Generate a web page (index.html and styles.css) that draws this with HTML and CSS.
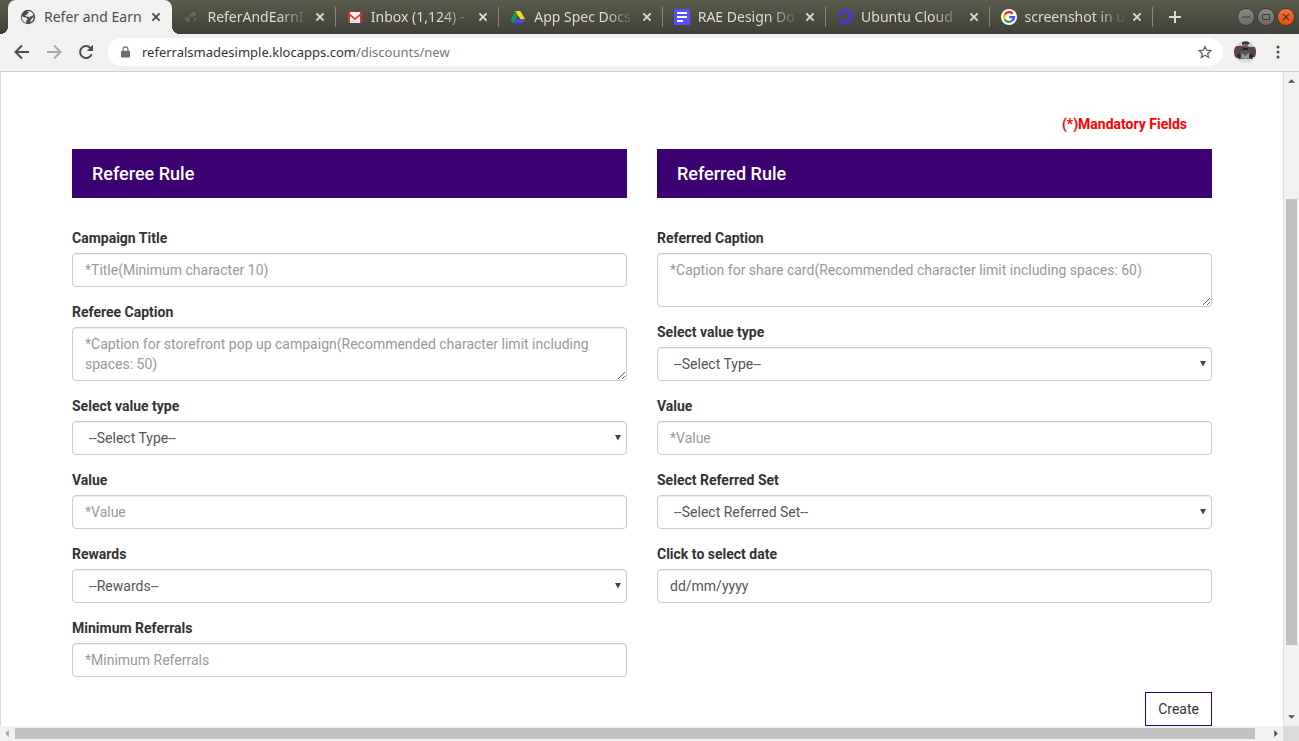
FILE: index.html
```html
<!DOCTYPE html>
<html lang="en">
<head>
<meta charset="utf-8">
<title>Refer and Earn</title>
<link rel="stylesheet" href="styles.css">
</head>
<body>
<svg class="defs" width="0" height="0" aria-hidden="true">
  <symbol id="globe" viewBox="0 0 16 16"><circle cx="8" cy="8" r="7.2" fill="currentColor"/><path class="land" d="M1.8 7.2 L4.6 8.6 L6.6 8.8 L7.6 10.2 L6.4 11.6 L6.2 13.9 A6 6 0 0 1 1.8 7.2Z M7.2 2 A6.2 6.2 0 0 1 13.2 4.8 L12.4 7.2 L10.6 7 L10 8.6 L8 7.6 L5.6 7.6 L5.4 6 L7.8 5.6 L7.6 4 L9.2 3.4Z M12.4 9 L13.9 8.6 A6 6 0 0 1 10.6 13.2 L10.6 11 Z"/></symbol>
  <symbol id="cross" viewBox="0 0 10 10"><path d="M1.4 1.4 L8.6 8.6 M8.6 1.4 L1.4 8.6" fill="none" stroke="currentColor" stroke-width="1.9"/></symbol>
  <symbol id="down" viewBox="0 0 8 7"><path d="M1 1 H7 L4 6.600Z" fill="currentColor"/></symbol>
</svg>

<header class="browser">
  <div class="titlebar">
    <nav class="tabs" aria-label="Tabs">
      <div class="tab active">
        <svg class="favicon"><use href="#globe"/></svg>
        <span class="tab-title">Refer and Earn</span>
        <button class="close" aria-label="Close tab"><svg><use href="#cross"/></svg></button>
      </div>
      <div class="tab">
        <svg class="favicon dim"><use href="#globe"/></svg>
        <span class="tab-title">ReferAndEarnI</span>
        <button class="close" aria-label="Close tab"><svg><use href="#cross"/></svg></button>
      </div>
      <div class="tab">
        <svg class="favicon" viewBox="0 0 16 16"><path d="M1 3h14v11H1z" fill="#f2f2f2"/><path d="M3.500 13.500 L8 9.500 L12.500 13.500Z" fill="#dcdcdc"/><path d="M1 3.200 L8 9 L15 3.200 V5.400 L8 11 L1 5.400Z" fill="#e2382b"/><path d="M1 3h2v11H1z M13 3H15v11h-2z" fill="#d9301f"/></svg>
        <span class="tab-title">Inbox (1,124) -</span>
        <button class="close" aria-label="Close tab"><svg><use href="#cross"/></svg></button>
      </div>
      <div class="tab">
        <svg class="favicon" viewBox="0 0 16 16"><path d="M5.300 2 L0.600 10.300 L3.100 14.200 L8 6.200Z" fill="#0f9d58"/><path d="M5.300 2 H10.300 L15.200 10.300 H10.400Z" fill="#ffd61a"/><path d="M5.600 10.300 H15.300 L12.900 14.200 H3.100Z" fill="#4f46f5"/></svg>
        <span class="tab-title">App Spec Docs</span>
        <button class="close" aria-label="Close tab"><svg><use href="#cross"/></svg></button>
      </div>
      <div class="tab">
        <svg class="favicon" viewBox="0 0 16 16"><rect width="16" height="16" rx="1.500" fill="#5b4dff"/><path d="M3 4h10M3 8h10M3 12h6" stroke="#fff" stroke-width="1.800"/></svg>
        <span class="tab-title">RAE Design Do</span>
        <button class="close" aria-label="Close tab"><svg><use href="#cross"/></svg></button>
      </div>
      <div class="tab">
        <svg class="favicon" viewBox="0 0 16 16"><path d="M1.500 8 A6.500 6.500 0 1 1 8 14.500" fill="none" stroke="#4331ff" stroke-width="2.600" transform="translate(0.800 0.400) scale(0.920)"/><path d="M5.400 10.800h2.800v3H5.400z M3 13h2.200v2.200H3z M1.200 11.200H3V13H1.200z" fill="#4331ff"/></svg>
        <span class="tab-title">Ubuntu Cloud</span>
        <button class="close" aria-label="Close tab"><svg><use href="#cross"/></svg></button>
      </div>
      <div class="tab">
        <svg class="favicon" viewBox="0 0 16 16"><circle cx="8" cy="8" r="8" fill="#fff"/><g fill="none" stroke-width="2.400"><path d="M11.600 4.600 A4.900 4.900 0 0 0 3.800 5.500" stroke="#ea2b1f"/><path d="M3.800 5.500 A4.900 4.900 0 0 0 3.800 10.500" stroke="#fbbc05"/><path d="M3.800 10.500 A4.900 4.900 0 0 0 11.200 11.700" stroke="#1fa84c"/><path d="M11.200 11.700 A4.900 4.900 0 0 0 12.900 8.100 H8.200" stroke="#4f46f5"/></g></svg>
        <span class="tab-title">screenshot in u</span>
        <button class="close" aria-label="Close tab"><svg><use href="#cross"/></svg></button>
      </div>
    </nav>
    <button class="new-tab" aria-label="New tab"><svg viewBox="0 0 12 12"><path d="M6 0v12M0 6h12" stroke="currentColor" stroke-width="2"/></svg></button>
    <div class="window-buttons">
      <button class="win" aria-label="Minimize"><svg viewBox="0 0 16 16"><path d="M4 8h8" stroke="currentColor"/></svg></button>
      <button class="win" aria-label="Maximize"><svg viewBox="0 0 16 16"><path d="M4.500 5.500h7v5h-7z" fill="none" stroke="currentColor"/></svg></button>
      <button class="win quit" aria-label="Close"><svg viewBox="0 0 16 16"><path d="M5 5l6 6M11 5l-6 6" stroke="currentColor" stroke-width="1.200"/></svg></button>
    </div>
  </div>

  <div class="toolbar">
    <button class="tool" aria-label="Back"><svg viewBox="0 0 16 16"><path d="M15 8H2M8 1.500L1.500 8L8 14.500" fill="none" stroke="currentColor" stroke-width="2"/></svg></button>
    <button class="tool off" aria-label="Forward"><svg viewBox="0 0 16 16"><path d="M1 8h13M8 1.500L14.500 8L8 14.500" fill="none" stroke="currentColor" stroke-width="2"/></svg></button>
    <button class="tool" aria-label="Reload"><svg viewBox="0 0 16 16"><path d="M13.600 10.300 A6 6 0 1 1 12.400 3.900" fill="none" stroke="currentColor" stroke-width="2"/><path d="M15 0.800V7H8.800Z" fill="currentColor"/></svg></button>
    <div class="address">
      <svg class="lock" viewBox="0 0 10 12"><path d="M1 4.500h8a1 1 0 0 1 1 1V11a1 1 0 0 1-1 1H1a1 1 0 0 1-1-1V5.500a1 1 0 0 1 1-1z" fill="currentColor"/><path d="M2.300 5V3a2.700 2.700 0 0 1 5.400 0v2" fill="none" stroke="currentColor" stroke-width="1.200"/></svg>
      <span class="url">referralsmadesimple.klocapps.com<span class="path">/discounts/new</span></span>
      <button class="star" aria-label="Bookmark this page"><svg viewBox="0 0 14 14"><path d="M7 1.400L8.700 5.200L12.900 5.600L9.700 8.400L10.600 12.500L7 10.300L3.400 12.500L4.300 8.400L1.100 5.600L5.300 5.200Z" fill="none" stroke="currentColor" stroke-width="1.300"/></svg></button>
    </div>
    <button class="avatar" aria-label="Profile"><svg viewBox="0 0 22 22"><clipPath id="round"><circle cx="11" cy="11" r="11"/></clipPath><g clip-path="url(#round)"><path d="M0 0h22v22H0z" fill="#d8d5d6"/><path d="M0 6 Q5 4 11 5 T22 6V17H0z" fill="#5b434a"/><path d="M8 1l5-1 3 2-2 2H8z" fill="#38394a"/><path d="M9 3h5v6H9z" fill="#8a6459"/><path d="M9 6.500h5V9l-2.500 1.500L9 9z" fill="#241f24"/><path d="M4 18l2-7 4-2h3l4 2 2 7z" fill="#4e5a55"/><path d="M8 12l3 3 4-3 1 5-4 1-5-1z" fill="#8e9a92"/><path d="M3 14l3-2 1 4-3 2z M16 12l3 2-1 4-3-2z" fill="#2c2429"/><path d="M0 16l4 1 1 2h13l1-3 3 0v6H0z" fill="#dedcdc"/></g></svg></button>
    <button class="menu" aria-label="Menu"><svg viewBox="0 0 4 14"><circle cx="2" cy="2" r="1.500"/><circle cx="2" cy="7" r="1.500"/><circle cx="2" cy="12" r="1.500"/></svg></button>
  </div>
</header>

<div class="viewport">
  <main class="page">
    <form class="container">
      <p class="mandatory">(*)Mandatory Fields</p>
      <div class="columns">
        <section class="column">
          <h4 class="panel-title">Referee Rule</h4>
          <div class="field"><label for="title">Campaign Title</label><input class="control" id="title" type="text" placeholder="*Title(Minimum character 10)"></div>
          <div class="field"><label for="caption">Referee Caption</label><textarea class="control" id="caption" rows="2" placeholder="*Caption for storefront pop up campaign(Recommended character limit including spaces: 50)"></textarea></div>
          <div class="field"><label for="type">Select value type</label><div class="select"><select class="control" id="type"><option>--Select Type--</option></select><svg><use href="#down"/></svg></div></div>
          <div class="field"><label for="value">Value</label><input class="control" id="value" type="text" placeholder="*Value"></div>
          <div class="field"><label for="rewards">Rewards</label><div class="select"><select class="control" id="rewards"><option>--Rewards--</option></select><svg><use href="#down"/></svg></div></div>
          <div class="field"><label for="minimum">Minimum Referrals</label><input class="control" id="minimum" type="text" placeholder="*Minimum Referrals"></div>
        </section>
        <section class="column">
          <h4 class="panel-title">Referred Rule</h4>
          <div class="field"><label for="rcaption">Referred Caption</label><textarea class="control" id="rcaption" rows="2" placeholder="*Caption for share card(Recommended character limit including spaces: 60)"></textarea></div>
          <div class="field"><label for="rtype">Select value type</label><div class="select"><select class="control" id="rtype"><option>--Select Type--</option></select><svg><use href="#down"/></svg></div></div>
          <div class="field"><label for="rvalue">Value</label><input class="control" id="rvalue" type="text" placeholder="*Value"></div>
          <div class="field"><label for="rset">Select Referred Set</label><div class="select"><select class="control" id="rset"><option>--Select Referred Set--</option></select><svg><use href="#down"/></svg></div></div>
          <div class="field"><label for="date">Click to select date</label><input class="control date" id="date" type="text" placeholder="dd/mm/yyyy"></div>
        </section>
      </div>
      <div class="actions"><button class="create" type="button">Create</button></div>
    </form>
  </main>
  <div class="scroll vertical">
    <svg viewBox="0 0 8 4"><path d="M0 4h8L4 0z"/></svg>
    <div class="track"><div class="thumb"></div></div>
    <svg viewBox="0 0 8 4"><path d="M0 0h8L4 4z"/></svg>
  </div>
  <div class="scroll horizontal">
    <svg class="faded" viewBox="0 0 4 8"><path d="M4 0v8L0 4z"/></svg>
    <div class="track"><div class="thumb"></div></div>
    <svg viewBox="0 0 4 8"><path d="M0 0v8l4-4z"/></svg>
  </div>
  <div class="corner"></div>
</div>
</body>
</html>
```
FILE: styles.css
```css
* { box-sizing: border-box; }

body {
  margin: 0;
  height: 100vh;
  display: flex;
  flex-direction: column;
  overflow: hidden;
  background: #fff;
  color: #333;
  font: 14px/20px Roboto, sans-serif;
}

button {
  display: flex;
  align-items: center;
  justify-content: center;
  padding: 0;
  border: 0;
  background: none;
  color: inherit;
  font: inherit;
}

.defs { position: absolute; }

/* Browser window */
.browser { flex: none; font-family: "Noto Sans", sans-serif; }

.titlebar {
  display: flex;
  align-items: center;
  height: 34px;
  padding: 0 5px 0 10px;
  background: linear-gradient(#5b5b4c, #3f3e39);
  color: #dfdbd2;
}

.tabs { display: flex; flex: 0 1 1143px; min-width: 0; height: 34px; }

.tab {
  position: relative;
  flex: 1 1 0;
  min-width: 0;
  display: flex;
  align-items: center;
  padding: 0 10px 0 11px;
}

.tab:not(.active)::after {
  content: "";
  position: absolute;
  right: 0;
  top: 7px;
  width: 1px;
  height: 20px;
  background: #87867b;
}

.tab.active {
  margin-left: -2px;
  padding-left: 12px;
  flex-basis: 3px;
  border-radius: 8px 8px 0 0;
  background: #f2f1f0;
  color: #4c4c4c;
}

.tab.active::before,
.tab.active::after {
  content: "";
  position: absolute;
  bottom: 0;
  width: 8px;
  height: 8px;
}

.tab.active::before { left: -8px; background: radial-gradient(circle at 0 0, transparent 8px, #f2f1f0 8px); }
.tab.active::after { right: -8px; background: radial-gradient(circle at 100% 0, transparent 8px, #f2f1f0 8px); }

.favicon { flex: none; width: 16px; height: 16px; margin-right: 8px; }
.land { fill: #f2f1f0; }
.favicon.dim { color: #45464a; opacity: 0.15; }

.tab-title {
  flex: 1;
  min-width: 0;
  overflow: hidden;
  white-space: nowrap;
  -webkit-mask-image: linear-gradient(90deg, #000 70%, transparent);
}

.tab.active .tab-title { -webkit-mask-image: none; }

.close { flex: none; width: 12px; height: 16px; margin-left: 5px; }
.close svg { width: 10px; height: 10px; }

.new-tab { flex: none; width: 24px; height: 24px; margin-left: 10px; }
.new-tab svg { width: 12px; height: 12px; }

.window-buttons { display: flex; gap: 4px; margin-left: auto; }
.win { width: 16px; height: 16px; border-radius: 50%; background: linear-gradient(#8b8a81, #6b6a64); color: #3c3b37; box-shadow: 0 0 0 1px #3c3b37; }
.win svg { width: 16px; height: 16px; }
.quit { background: linear-gradient(#f9703a, #e84e0c); }

.toolbar {
  display: flex;
  align-items: center;
  height: 38px;
  padding: 0 13px 1px 14px;
  border-bottom: 1px solid #ccc;
  background: #f2f1f0;
  color: #4c4c4c;
}

.tool { width: 16px; height: 16px; margin-right: 16px; }
.tool svg { width: 16px; height: 16px; }
.tool.off { color: #aaa; }

.address {
  flex: 1;
  min-width: 0;
  display: flex;
  align-items: center;
  height: 28px;
  margin-left: -2px;
  padding: 0 10px 0 13px;
  border-radius: 14px;
  background: #fff;
}

.lock { width: 9px; height: 12px; margin-right: 12px; color: #6e6e6e; }
.url { flex: 1; color: #333; font-size: 13px; white-space: nowrap; }
.path { color: #777; }
.star { width: 16px; height: 16px; color: #666; }
.star svg { width: 14px; height: 14px; }
.avatar { width: 22px; height: 22px; margin-left: 11px; }
.avatar svg { width: 22px; height: 22px; }
.menu { width: 16px; height: 16px; margin-left: 14px; }
.menu svg { width: 4px; height: 14px; fill: currentColor; }

/* Page area with its scrollbars */
.viewport {
  flex: 1;
  min-height: 0;
  display: grid;
  grid-template: minmax(0, 1fr) 15px / minmax(0, 1fr) 16px;
}

.page { overflow: hidden; border-left: 1px solid #dcdcdc; }
.container { max-width: 1140px; margin: 0 auto; padding-top: 42px; }

.mandatory {
  margin: 0 25px 15px;
  text-align: right;
  color: #f00;
  font-weight: 700;
}

.columns { display: grid; grid-template-columns: 1fr 1fr; gap: 30px; }

.panel-title {
  margin: 0 0 30px;
  padding: 15px 20px 14px;
  background: #3b0072;
  color: #fff;
  font-size: 18px;
  font-weight: 500;
}

.field { margin-bottom: 15px; }
.field label { display: block; margin-bottom: 5px; font-weight: 700; }

.control {
  display: block;
  width: 100%;
  height: 34px;
  padding: 6px 12px;
  border: 1px solid #ccc;
  border-radius: 4px;
  background: #fff;
  box-shadow: inset 0 1px 1px rgba(0, 0, 0, 0.075);
  color: #555;
  font: inherit;
}

textarea.control { height: 54px; resize: vertical; overflow: hidden; }
.control::placeholder { color: #999; opacity: 1; }
.control.date::placeholder { color: #555; }

.select { position: relative; }
.select select { appearance: none; padding-left: 16px; }
.select svg { position: absolute; right: 5px; top: 13px; width: 8px; height: 7px; color: #444; pointer-events: none; }

.actions { display: flex; justify-content: flex-end; }
.create { height: 34px; padding: 0 12px; border: 1px solid #3b0072; background: #fff; color: #333; }

.scroll { display: flex; align-items: center; background: #f1f1f1; }
.scroll svg { flex: none; fill: #505050; }
.scroll svg.faded { fill: #a3a3a3; }
.track { flex: 1; display: flex; }
.thumb { background: #c1c1c1; }

.vertical { flex-direction: column; padding: 7px 0; border-left: 1px solid #dcdcdc; }
.vertical svg { width: 7px; height: 4px; }
.vertical .track { flex-direction: column; padding: 7px 0; }
.vertical .track::before { content: ""; flex: 109; }
.vertical .track::after { content: ""; flex: 63; }
.vertical .thumb { flex: 446; width: 11px; }

.horizontal { padding: 0 5px; }
.horizontal svg { width: 4px; height: 7px; }
.horizontal .track { padding: 0 14px 0 6px; }
.horizontal .thumb { flex: 1240; height: 11px; }
.horizontal .track::after { content: ""; flex: 5; }

.corner { background: #dcdcdc; }
```
